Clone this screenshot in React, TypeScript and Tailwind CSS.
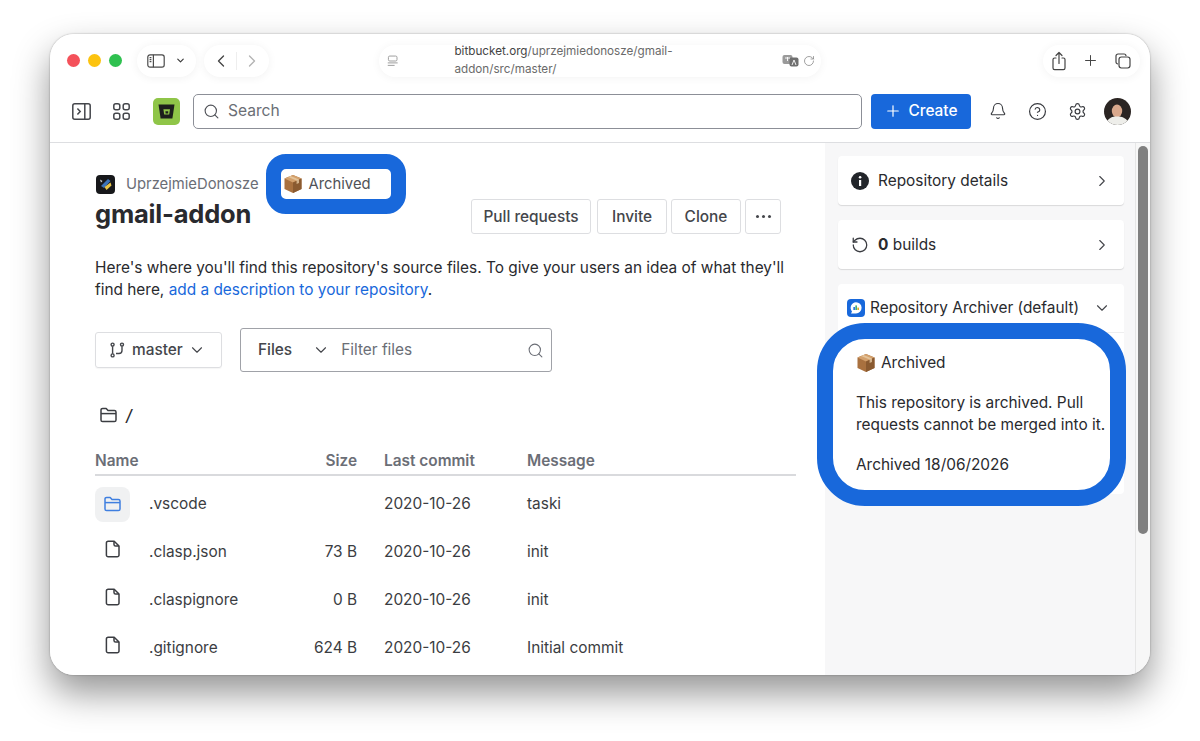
import { Bell, ChevronDown, ChevronLeft, ChevronRight, CircleHelp, Plus, RotateCcw, Search, Settings } from 'lucide-react'

const files = [
  { name: '.clasp.json', size: '73 B', date: '2020-10-26', message: 'init', height: 'h-[48px]' },
  { name: '.claspignore', size: '0 B', date: '2020-10-26', message: 'init', height: 'h-[48px]' },
  { name: '.gitignore', size: '624 B', date: '2020-10-26', message: 'Initial commit', height: 'h-[48px]' },
]

function PackageEmoji({ size = 20 }: { size?: number }) {
  return (
    <svg width={size} height={size} viewBox="0 0 20 20">
      <path d="M10 1 18.5 4.6V15L10 19 1.5 15V4.6Z" fill="#a9713f" />
      <path d="M10 1 18.5 4.6 10 8.4 1.5 4.6Z" fill="#d3a06c" />
      <path d="M10 8.4 18.5 4.6V15L10 19Z" fill="#8a5a30" />
      <path d="M5 2.9 13.6 6.6V10L16 9V5.6L7.6 1.9Z" fill="#e9cfa8" opacity="0.75" />
    </svg>
  )
}

function FileIcon() {
  return (
    <svg width="16" height="18" viewBox="0 0 16 18" fill="none" stroke="#3b3d42" strokeWidth="1.5" strokeLinejoin="round">
      <path d="M3.2 1.2H9.2L14 6V15A1.8 1.8 0 0 1 12.2 16.8H3.2A1.8 1.8 0 0 1 1.4 15V3A1.8 1.8 0 0 1 3.2 1.2Z" />
      <path d="M9 1.2V4.4A1.6 1.6 0 0 0 10.6 6H14" />
    </svg>
  )
}

function FolderIcon({ color }: { color: string }) {
  return (
    <svg width="17" height="16" viewBox="0 0 17 16" fill="none" stroke={color} strokeWidth="1.5" strokeLinejoin="round">
      <path d="M1 3A1.6 1.6 0 0 1 2.6 1.4H6.2L8 3.4H14.4A1.6 1.6 0 0 1 16 5V13A1.6 1.6 0 0 1 14.4 14.6H2.6A1.6 1.6 0 0 1 1 13Z" />
      <path d="M1 6.6H16" />
    </svg>
  )
}

function BrowserBar() {
  return (
    <div className="flex h-[50px] items-center bg-white pl-[17px] pr-[10px] pt-[3px]">
      <div className="flex gap-[8px]">
        <span className="h-[13px] w-[13px] rounded-full bg-[#f4515a]" />
        <span className="h-[13px] w-[13px] rounded-full bg-[#fcc30f]" />
        <span className="h-[13px] w-[13px] rounded-full bg-[#2fc150]" />
      </div>
      <div className="ml-[15px] flex h-[32px] w-[59px] items-center justify-center gap-[10px] rounded-full bg-white shadow-[0_1px_10px_rgba(0,0,0,0.06)]">
        <svg width="18" height="14" viewBox="0 0 18 14" fill="none" stroke="#4a4a4a" strokeWidth="1.2">
          <rect x="0.8" y="0.8" width="16.4" height="12.4" rx="2.2" />
          <path d="M6.4 0.8V13.2" />
          <path d="M2.6 3.6H4.4M2.6 5.6H4.4M2.6 7.6H4.4" />
        </svg>
        <ChevronDown size={11} strokeWidth={2.6} className="text-[#3c3c3c]" />
      </div>
      <div className="ml-[8px] flex h-[32px] w-[65px] items-center justify-center rounded-full bg-white shadow-[0_1px_10px_rgba(0,0,0,0.06)]">
        <ChevronLeft size={20} strokeWidth={1.6} className="text-[#444444]" />
        <span className="mx-[5px] h-[18px] w-px bg-[#eeeeee]" />
        <ChevronRight size={20} strokeWidth={1.6} className="text-[#b3b3b3]" />
      </div>
      <div className="ml-[110px] flex h-[32px] w-[442px] items-center rounded-full bg-white pl-[8px] pr-[6px] shadow-[0_1px_10px_rgba(0,0,0,0.05)]">
        <svg width="12" height="12" viewBox="0 0 12 12" fill="none" stroke="#9a9a9a" strokeWidth="1">
          <rect x="1.5" y="0.8" width="9" height="5.2" rx="1.4" />
          <path d="M0.8 8H11.2M0.8 10.6H8" />
        </svg>
        <span className="ml-[56px] font-['Inter',sans-serif] text-[11.7px] text-[#6a6a6a]">
          <span className="text-[#444444]">bitbucket.org</span>/uprzejmiedonosze/gmail-addon/src/master/
        </span>
        <span className="ml-[23px] flex items-center gap-[4px] text-[#8a8a8a]">
          <svg width="17" height="13" viewBox="0 0 17 13">
            <rect x="0.5" y="1" width="10" height="9" rx="2" fill="#9a9a9a" />
            <rect x="7.5" y="3.5" width="9" height="9" rx="2" fill="#6f6f6f" />
            <path d="M3 4H8M5.5 3V7" stroke="#ffffff" strokeWidth="0.9" />
            <path d="M10 11 12 6 14 11" stroke="#ffffff" strokeWidth="0.9" fill="none" />
          </svg>
          <RotateCcw size={12} strokeWidth={1.6} className="-scale-x-100" />
        </span>
      </div>
      <div className="ml-auto flex h-[32px] w-[97px] items-center justify-between rounded-full bg-white px-[9px] shadow-[0_1px_10px_rgba(0,0,0,0.05)]">
        <svg width="14" height="20" viewBox="0 0 14 20" fill="none" stroke="#444444" strokeWidth="1.2" strokeLinecap="round" strokeLinejoin="round">
          <path d="M4 7H2.6A1.6 1.6 0 0 0 1 8.6V17A1.6 1.6 0 0 0 2.6 18.6H11.4A1.6 1.6 0 0 0 13 17V8.6A1.6 1.6 0 0 0 11.4 7H10" />
          <path d="M7 12.5V1.5M4 4.5 7 1.5 10 4.5" />
        </svg>
        <Plus size={17} strokeWidth={1.4} className="text-[#444444]" />
        <svg width="16" height="16" viewBox="0 0 16 16" fill="none" stroke="#444444" strokeWidth="1.2">
          <path d="M3 11A2 2 0 0 1 1 9V3A2 2 0 0 1 3 1H9A2 2 0 0 1 11 3" />
          <rect x="4" y="4" width="11" height="11" rx="2.4" />
        </svg>
      </div>
    </div>
  )
}

function AppHeader() {
  return (
    <div className="flex h-[59px] items-center border-b border-[#dddee1] bg-white pb-[4px] pl-[22px] pr-[18px]">
      <svg width="19" height="17" viewBox="0 0 19 17" fill="none" stroke="#44464b" strokeWidth="1.5">
        <rect x="0.8" y="0.8" width="17.4" height="15.4" rx="2" />
        <path d="M12.8 0.8V16.2" />
        <path d="M5.4 5.6 8.2 8.5 5.4 11.4" />
      </svg>
      <svg className="ml-[22px]" width="17" height="17" viewBox="0 0 17 17" fill="none" stroke="#44464b" strokeWidth="1.5">
        <rect x="0.8" y="0.8" width="6" height="6" rx="2" />
        <rect x="10.2" y="0.8" width="6" height="6" rx="2" />
        <rect x="0.8" y="10.2" width="6" height="6" rx="2" />
        <rect x="10.2" y="10.2" width="6" height="6" rx="2" />
      </svg>
      <div className="ml-[23px] flex h-[27px] w-[27px] items-center justify-center rounded-[5px] bg-[#8fc548]">
        <svg width="17" height="15" viewBox="0 0 17 15">
          <path d="M0.5 0.5H16.5L14.4 14.5H2.6Z" fill="#1d1f1c" />
          <path d="M5.4 5.2H12L11.2 10.4H6.2Z" fill="#8fc548" />
          <path d="M7.4 7.2H10.2V9.4H7.6Z" fill="#1d1f1c" />
        </svg>
      </div>
      <div className="ml-[13px] flex h-[35px] w-[669px] items-center rounded-[5px] border border-[#8c8f97] pl-[9px]">
        <Search size={17} strokeWidth={1.6} className="text-[#505258]" />
        <span className="ml-[8px] text-[15.6px] text-[#6b6e76]">Search</span>
      </div>
      <div className="ml-[9px] flex h-[35px] w-[100px] items-center justify-center gap-[6px] rounded-[4px] bg-[#1868db] text-white">
        <Plus size={18} strokeWidth={1.6} />
        <span className="text-[15.4px] font-medium">Create</span>
      </div>
      <Bell size={18} strokeWidth={1.5} className="ml-[18px] text-[#3b3d42]" />
      <CircleHelp size={19} strokeWidth={1.5} className="ml-[21px] text-[#3b3d42]" />
      <Settings size={19} strokeWidth={1.5} className="ml-[21px] text-[#3b3d42]" />
      <svg className="ml-[17px] rounded-full" width="27" height="27" viewBox="0 0 27 27">
        <rect width="27" height="27" fill="#2b2523" />
        <ellipse cx="13" cy="13" rx="5.2" ry="6.5" fill="#d9a88c" />
        <path d="M2 27C3 20 8 18.5 13 18.5S24 20 25 27Z" fill="#eeeeea" />
      </svg>
    </div>
  )
}

function MainColumn() {
  return (
    <div className="min-w-0 flex-1 overflow-hidden bg-white pl-[45px] pr-[29px] text-[#292a2e]">
      <div className="mt-[11px] flex h-[60px] items-center">
        <svg className="ml-[1px]" width="19" height="19" viewBox="0 0 19 19">
          <rect width="19" height="19" rx="4" fill="#17181b" />
          <path d="M5 11 12 4 14.5 6 8 13Z" fill="#3b73b9" />
          <path d="M8.5 12 14.5 7.5 15.5 10.5 10.5 15Z" fill="#e8c547" />
          <path d="M4 4.5 6.5 6 5 7.5Z" fill="#d7dce2" />
        </svg>
        <span className="ml-[11px] text-[14.8px] text-[#6b6e76]">UprzejmieDonosze</span>
        <div className="ml-[7px] flex h-[60px] w-[140px] items-center rounded-[20px] border-[15px] border-[#1868db] bg-white">
          <span className="ml-[2px] flex items-center gap-[6px] text-[14.8px] text-[#505258]">
            <PackageEmoji />
            Archived
          </span>
        </div>
      </div>
      <div className="-mt-[17px] flex h-[35px] items-center justify-between pr-[15px]">
        <h1 className="-mt-[2px] text-[25.5px] font-bold leading-none tracking-[-0.2px]">gmail-addon</h1>
        <div className="mt-[4px] flex gap-[4px] text-[15.4px] font-medium text-[#44464b]">
          <span className="mr-[2px] flex h-[35px] w-[120px] items-center justify-center rounded-[3px] border border-[#dddee1]">Pull requests</span>
          <span className="flex h-[35px] w-[70px] items-center justify-center rounded-[3px] border border-[#dddee1]">Invite</span>
          <span className="flex h-[35px] w-[70px] items-center justify-center rounded-[3px] border border-[#dddee1]">Clone</span>
          <span className="flex h-[35px] w-[36px] items-center justify-center gap-[3px] rounded-[3px] border border-[#dddee1]">
            <i className="h-[3px] w-[3px] rounded-full bg-[#44464b]" />
            <i className="h-[3px] w-[3px] rounded-full bg-[#44464b]" />
            <i className="h-[3px] w-[3px] rounded-full bg-[#44464b]" />
          </span>
        </div>
      </div>
      <p className="mt-[25px] w-[690px] text-[15.4px] leading-[22px]">
        Here's where you'll find this repository's source files. To give your users an idea of what they'll find here,{' '}
        <span className="text-[#1868db]">add a description to your repository</span>.
      </p>
      <div className="mt-[27px] flex items-center">
        <div className="flex h-[36px] w-[127px] items-center rounded-[3px] border border-[#dddee1] pl-[14px] text-[#44464b] shadow-[0_1px_1px_rgba(0,0,0,0.04)]">
          <svg width="15" height="16" viewBox="0 0 15 16" fill="none" stroke="#44464b" strokeWidth="1.4">
            <circle cx="2.6" cy="2.6" r="1.5" />
            <circle cx="2.6" cy="13.4" r="1.5" />
            <circle cx="12" cy="2.6" r="1.5" />
            <path d="M2.6 4.2V11.8M12 4.2V8.5A3 3 0 0 1 9 11.5H6" />
          </svg>
          <span className="ml-[7px] text-[15.4px] font-medium">master</span>
          <ChevronDown size={18} strokeWidth={1.5} className="ml-[5px]" />
        </div>
        <div className="ml-[18px] flex h-[44px] w-[312px] items-center rounded-[3px] border border-[#a0a2a8] pl-[17px] pr-[7px]">
          <span className="text-[15.4px] font-medium text-[#44464b]">Files</span>
          <ChevronDown size={18} strokeWidth={1.5} className="ml-[20px] text-[#44464b]" />
          <span className="ml-[11px] text-[15.4px] text-[#6b6e76]">Filter files</span>
          <Search size={17} strokeWidth={1.5} className="ml-auto text-[#6b6e76]" />
        </div>
      </div>
      <div className="mt-[33px] flex h-[20px] items-center pl-[5px]">
        <FolderIcon color="#3b3d42" />
        <span className="ml-[9px] text-[16px] font-medium italic">/</span>
      </div>
      <div className="mt-[24px] flex h-[27px] items-start border-b-2 border-[#d9dadd] text-[15.4px] font-semibold text-[#6b6e76]">
        <span className="w-[200px]">Name</span>
        <span className="w-[62px] text-right">Size</span>
        <span className="ml-[27px] w-[143px]">Last commit</span>
        <span>Message</span>
      </div>
      <div className="mt-[4px] flex h-[48px] items-center text-[15.4px] text-[#3b3d42]">
        <span className="flex h-[35px] w-[35px] items-center justify-center rounded-[8px] bg-[#f0f1f2]">
          <FolderIcon color="#3f7fe0" />
        </span>
        <span className="ml-[19px] w-[146px]">.vscode</span>
        <span className="w-[62px]" />
        <span className="ml-[27px] w-[143px]">2020-10-26</span>
        <span>taski</span>
      </div>
      {files.map((f) => (
        <div key={f.name} className={`flex items-center text-[15.4px] text-[#3b3d42] ${f.height}`}>
          <span className="flex w-[35px] -translate-y-[3px] justify-center">
            <FileIcon />
          </span>
          <span className="ml-[19px] w-[146px]">{f.name}</span>
          <span className="w-[62px] text-right">{f.size}</span>
          <span className="ml-[27px] w-[143px]">{f.date}</span>
          <span>{f.message}</span>
        </div>
      ))}
    </div>
  )
}

function SidePanel() {
  return (
    <div className="flex w-[310px] shrink-0 flex-col bg-[#f7f7f8] pl-[13px] pr-[11px] pt-[13px] text-[15.4px] text-[#292a2e]">
      <div className="flex h-[49px] items-center rounded-[4px] bg-white pl-[13px] pr-[13px] shadow-[0_1px_1px_rgba(0,0,0,0.12)]">
        <svg width="18" height="18" viewBox="0 0 18 18">
          <circle cx="9" cy="9" r="9" fill="#22252a" />
          <rect x="8" y="8" width="2.2" height="6" fill="#ffffff" />
          <circle cx="9.1" cy="5.2" r="1.3" fill="#ffffff" />
        </svg>
        <span className="ml-[9px]">Repository details</span>
        <ChevronRight size={18} strokeWidth={1.5} className="ml-auto text-[#44464b]" />
      </div>
      <div className="mt-[15px] flex h-[49px] items-center rounded-[4px] bg-white pl-[13px] pr-[13px] shadow-[0_1px_1px_rgba(0,0,0,0.12)]">
        <RotateCcw size={18} strokeWidth={1.7} className="text-[#3b3d42]" />
        <span className="ml-[9px]">
          <b className="font-bold">0</b> builds
        </span>
        <ChevronRight size={18} strokeWidth={1.5} className="ml-auto text-[#44464b]" />
      </div>
      <div className="mt-[15px] h-[210px] rounded-[4px] bg-white">
        <div className="flex h-[49px] items-center border-b border-[#eeeeef] pl-[9px] pr-[13px]">
          <svg width="18" height="18" viewBox="0 0 18 18">
            <rect width="18" height="18" rx="4" fill="#1868db" />
            <path d="M9 3.2A5.6 5.6 0 0 1 9 14.4H4L5 12.4A5.6 5.6 0 0 1 9 3.2Z" fill="#ffffff" />
            <rect x="6.4" y="8" width="1.5" height="3" fill="#1868db" />
            <rect x="8.4" y="6.4" width="1.5" height="4.6" fill="#2fa36b" />
            <rect x="10.4" y="8.6" width="1.5" height="2.4" fill="#e5a50a" />
          </svg>
          <span className="ml-[5px]">Repository Archiver (default)</span>
          <ChevronDown size={18} strokeWidth={1.5} className="ml-auto text-[#44464b]" />
        </div>
        <div className="-ml-[21px] -mr-[2px] -mt-[10px] h-[183px] rounded-[48px] border-[16px] border-[#1868db] bg-white pl-[23px] pt-[12px]">
          <div className="flex h-[24px] items-center gap-[5px]">
            <PackageEmoji />
            Archived
          </div>
          <p className="mt-[17px] whitespace-nowrap leading-[22px]">
            This repository is archived. Pull
            <br />
            requests cannot be merged into it.
          </p>
          <p className="mt-[18px] leading-[22px]">Archived 18/06/2026</p>
        </div>
      </div>
    </div>
  )
}

export default function App() {
  return (
    <div className="h-[741px] w-[1200px] overflow-hidden bg-white px-[50px] pt-[34px] font-['Inter',sans-serif]">
      <div className="flex h-[641px] flex-col overflow-hidden rounded-[24px] bg-white shadow-[0_18px_36px_rgba(0,0,0,0.42),0_0_2px_rgba(0,0,0,0.35)]">
        <BrowserBar />
        <AppHeader />
        <div className="flex min-h-0 flex-1">
          <MainColumn />
          <SidePanel />
          <div className="w-[15px] shrink-0 border-l border-[#e6e6e6] bg-[#f7f7f7] px-[2px] pt-[3px]">
            <div className="h-[388px] rounded-full bg-[#808080]" />
          </div>
        </div>
      </div>
    </div>
  )
}
